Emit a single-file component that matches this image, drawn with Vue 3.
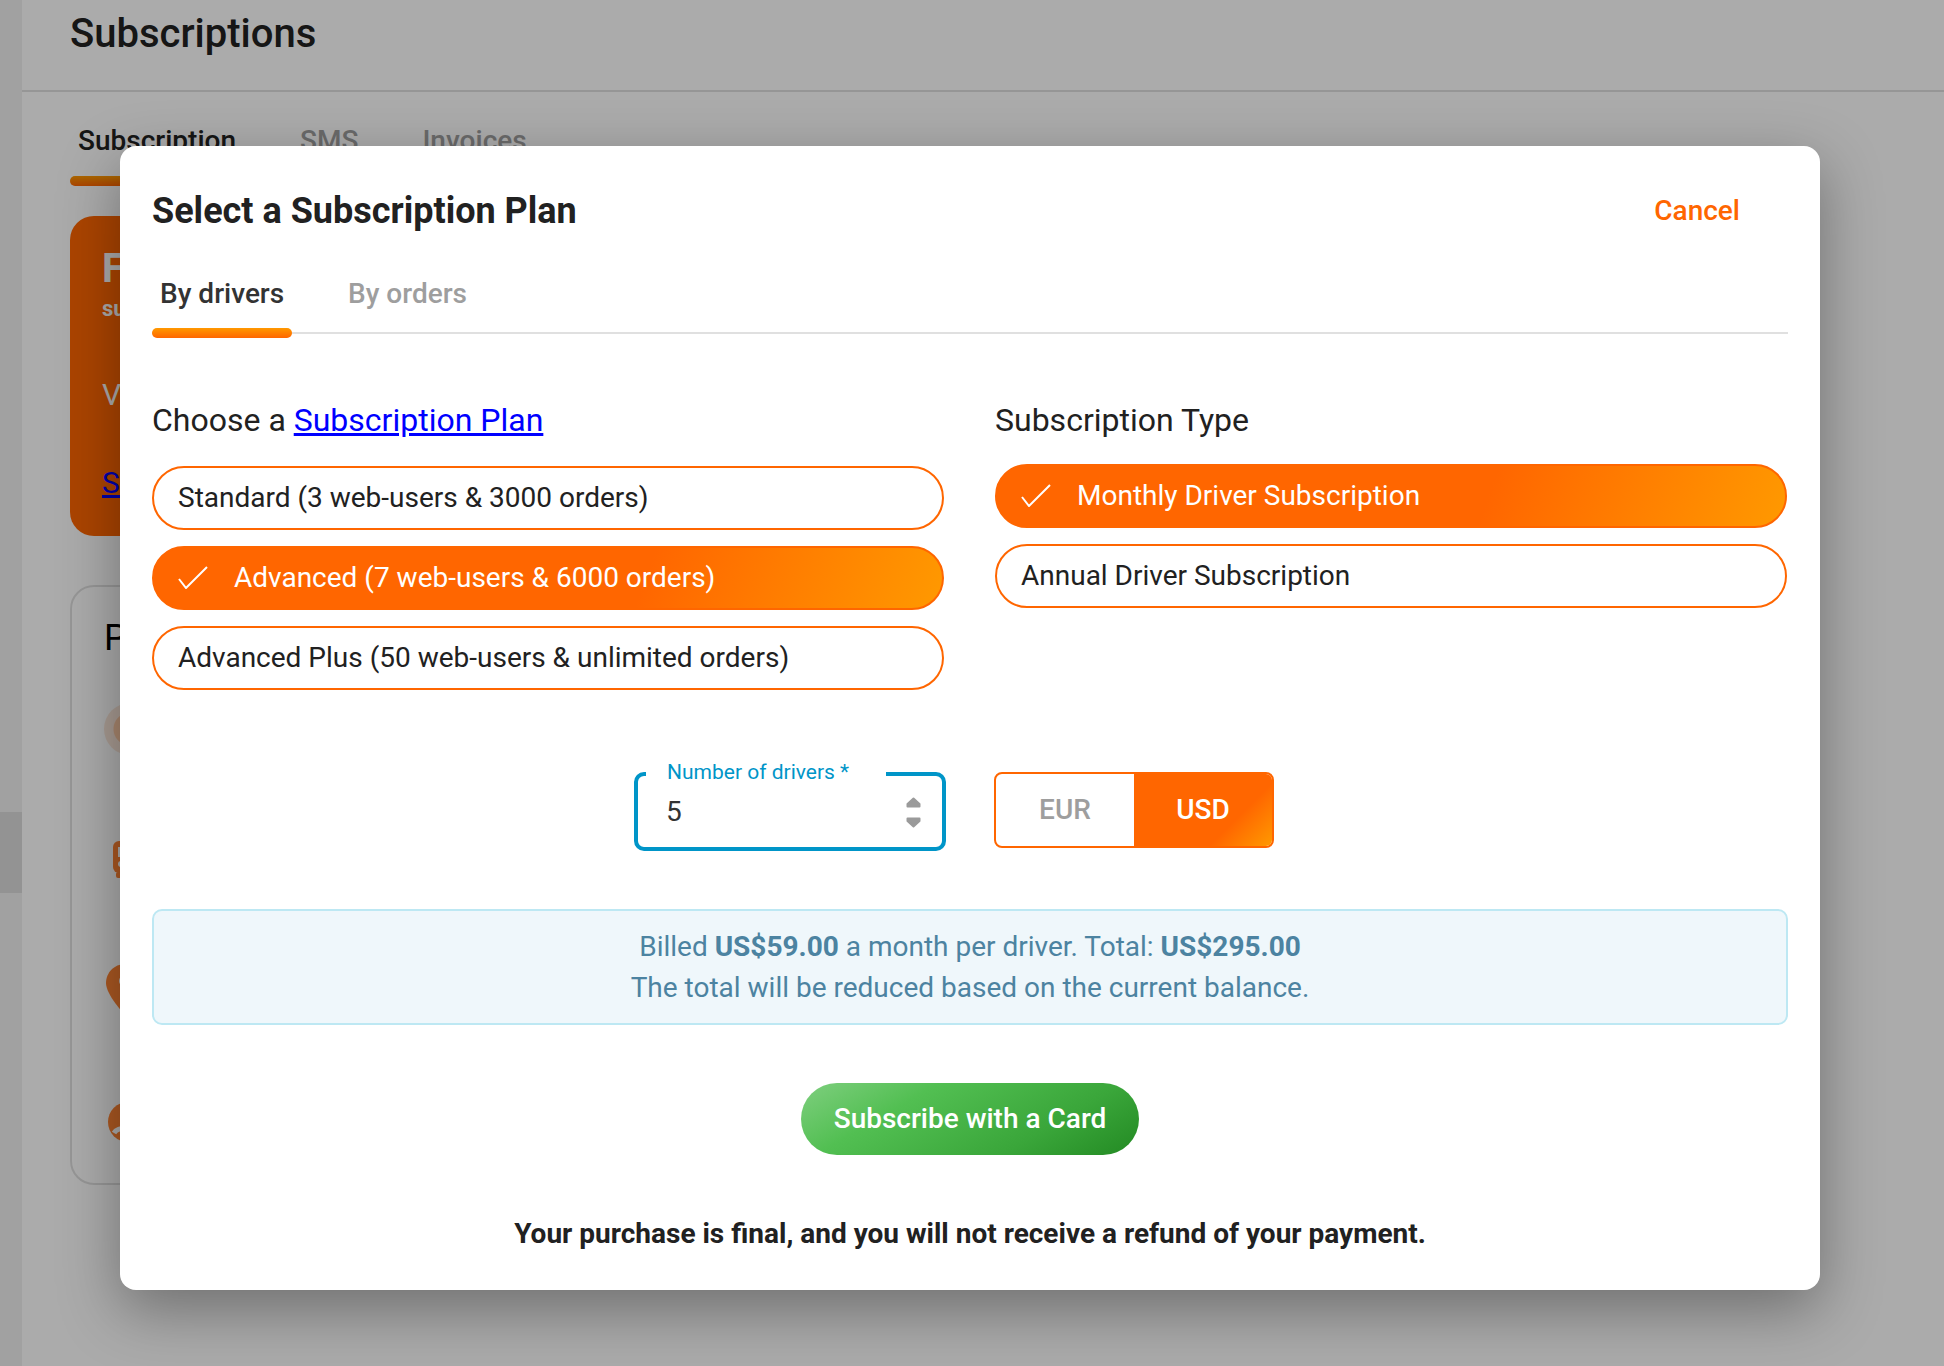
<script setup>
const plans = [
  { label: 'Standard (3 web-users & 3000 orders)', active: false },
  { label: 'Advanced (7 web-users & 6000 orders)', active: true },
  { label: 'Advanced Plus (50 web-users & unlimited orders)', active: false }
]
const types = [
  { label: 'Monthly Driver Subscription', active: true },
  { label: 'Annual Driver Subscription', active: false }
]
</script>

<template>
  <div class="page">
    <aside class="sidebar"><div class="side-item"></div></aside>
    <main class="main">
      <header class="page-head"><h1>Subscriptions</h1></header>
      <nav class="page-tabs">
        <span class="page-tab on">Subscription</span>
        <span class="page-tab">SMS</span>
        <span class="page-tab">Invoices</span>
      </nav>
      <section class="plan-card">
        <div class="plan-name">Free</div>
        <div class="plan-sub">subscription</div>
        <div class="plan-valid">Valid</div>
        <a class="plan-link" href="#">Subscribe</a>
      </section>
      <section class="features">
        <div class="features-title">Plan</div>
        <div class="feat-row"><span class="feat-dot"></span></div>
        <div class="feat-row">
          <svg width="40" height="40" viewBox="0 0 40 40"><rect x="1" y="2" width="34" height="32" rx="6" fill="#ff8433"/><rect x="6" y="8" width="24" height="10" fill="#fff"/><circle cx="9" cy="25" r="3" fill="#fff"/><rect x="4" y="33" width="8" height="6" rx="2" fill="#ff8433"/></svg>
        </div>
        <div class="feat-row">
          <svg width="40" height="56" viewBox="0 0 40 56"><path d="M20 1C9 1 1 10 1 20c0 12 19 32 19 32s19-20 19-32C39 10 31 1 20 1z" fill="#ff8433"/><circle cx="20" cy="18" r="6" fill="#fff"/></svg>
        </div>
        <div class="feat-row">
          <svg width="44" height="44" viewBox="0 0 44 44"><circle cx="22" cy="22" r="20" fill="#ff8433"/><circle cx="22" cy="16" r="7" fill="#fff"/><path d="M8 33c4-7 24-7 28 0" stroke="#fff" stroke-width="5" fill="none"/></svg>
        </div>
      </section>
    </main>

    <div class="backdrop">
      <div class="modal">
        <div class="modal-head">
          <h2>Select a Subscription Plan</h2>
          <button class="cancel" type="button">Cancel</button>
        </div>

        <div class="tabs">
          <span class="tab on">By drivers</span>
          <span class="tab">By orders</span>
        </div>

        <div class="choices">
          <div class="col col-left">
            <div class="col-label">Choose a <a href="#">Subscription Plan</a></div>
            <div class="pills">
              <div v-for="p in plans" :key="p.label" class="pill" :class="{ active: p.active }">
                <svg v-if="p.active" class="check" width="30" height="24" viewBox="0 0 30 24"><path d="M1 14l7 9L29 2" fill="none" stroke="#fff" stroke-width="2"/></svg>
                {{ p.label }}
              </div>
            </div>
          </div>
          <div class="col col-right">
            <div class="col-label">Subscription Type</div>
            <div class="pills">
              <div v-for="t in types" :key="t.label" class="pill" :class="{ active: t.active }">
                <svg v-if="t.active" class="check" width="30" height="24" viewBox="0 0 30 24"><path d="M1 14l7 9L29 2" fill="none" stroke="#fff" stroke-width="2"/></svg>
                {{ t.label }}
              </div>
            </div>
          </div>
        </div>

        <div class="qty-row">
          <fieldset class="qty">
            <legend>Number of drivers *</legend>
            <span class="qty-val">5</span>
            <span class="spin">
              <svg width="15" height="11" viewBox="0 0 15 11"><path d="M7.5 1.5L13.5 7v2.5h-12V7z" fill="#9a9a9a" stroke="#9a9a9a" stroke-width="2" stroke-linejoin="round"/></svg>
              <svg width="15" height="11" viewBox="0 0 15 11"><path d="M7.5 9.500L13.5 4V1.500h-12V4z" fill="#9a9a9a" stroke="#9a9a9a" stroke-width="2" stroke-linejoin="round"/></svg>
            </span>
          </fieldset>
          <div class="currency">
            <span class="cur">EUR</span>
            <span class="cur on">USD</span>
          </div>
        </div>

        <div class="info">
          <div>Billed <b>US$59.00</b> a month per driver. Total: <b>US$295.00</b></div>
          <div>The total will be reduced based on the current balance.</div>
        </div>

        <div class="submit-wrap"><button class="submit" type="button">Subscribe with a Card</button></div>

        <p class="final">Your purchase is final, and you will not receive a refund of your payment.</p>
      </div>
    </div>
  </div>
</template>

<style>
html, body { margin: 0; background: #fff; }
</style>

<style scoped>
* { box-sizing: border-box; }
.page {
  position: relative;
  width: 1944px;
  height: 1366px;
  overflow: hidden;
  display: flex;
  font-family: Roboto, "Liberation Sans", sans-serif;
  color: #212121;
  background: #fff;
}
.sidebar {
  width: 22px;
  flex: none;
  background: #f0f0f0;
  padding-top: 812px;
}
.side-item { height: 81px; background: #dcdcdc; }
.main { flex: 1; min-width: 0; }
.page-head {
  height: 92px;
  border-bottom: 2px solid #e0e0e0;
  padding: 11px 0 0 48px;
}
.page-head h1 {
  margin: 0;
  font-size: 40px;
  line-height: 46px;
  font-weight: 500;
}
.page-tabs {
  display: flex;
  gap: 48px;
  margin: 31px 0 0 48px;
  width: 460px;
}
.page-tab {
  position: relative;
  font-size: 28px;
  line-height: 36px;
  font-weight: 500;
  color: #9e9e9e;
  padding: 0 8px 27px;
}
.page-tab.on {
  color: #212121;
}
.page-tab.on::after {
  content: "";
  position: absolute;
  left: 0;
  right: 0;
  bottom: 0;
  height: 10px;
  border-radius: 5px;
  background: linear-gradient(#ff9900, #ff6600);
}
.plan-card {
  margin: 30px 0 0 48px;
  width: 1000px;
  height: 320px;
  border-radius: 24px;
  background: #ff6600;
  color: #fff;
  padding: 30px 32px;
}
.plan-name { font-size: 40px; font-weight: 700; line-height: 46px; }
.plan-sub { font-size: 22px; font-weight: 700; line-height: 26px; margin-top: 4px; }
.plan-valid { font-size: 30px; line-height: 36px; margin-top: 55px; }
.plan-link { display: block; font-size: 30px; line-height: 36px; margin-top: 52px; color: #00f; }
.features {
  margin: 49px 0 0 48px;
  width: 1000px;
  height: 600px;
  border: 2px solid #e0e0e0;
  border-radius: 24px;
  padding: 30px 32px;
}
.features-title { font-size: 36px; line-height: 42px; color: #000; }
.feat-row { height: 0; position: relative; }
.feat-row svg, .feat-dot { position: absolute; }
.feat-row:nth-child(2) .feat-dot {
  left: 0;
  top: 44px;
  width: 52px;
  height: 52px;
  border-radius: 50%;
  background: radial-gradient(circle, #fdc9a5 0 16px, #fbe7da 17px);
}
.feat-row:nth-child(3) svg { left: 8px; top: 180px; }
.feat-row:nth-child(4) svg { left: 1px; top: 304px; }
.feat-row:nth-child(5) svg { left: 2px; top: 441px; }

.backdrop {
  position: absolute;
  inset: 0;
  background: rgba(0, 0, 0, 0.33);
}
.modal {
  position: absolute;
  left: 120px;
  top: 146px;
  width: 1700px;
  height: 1144px;
  background: #fff;
  border-radius: 16px;
  padding: 0 32px;
  box-shadow: 0 20px 60px rgba(0, 0, 0, 0.35);
}
.modal-head {
  height: 95px;
  display: flex;
  align-items: center;
  justify-content: space-between;
  padding-top: 35px;
}
.modal-head h2 {
  margin: 0;
  font-size: 36px;
  line-height: 44px;
  font-weight: 700;
}
.cancel {
  border: 0;
  background: none;
  font: 500 28px/36px Roboto, sans-serif;
  color: #ff6600;
  padding: 0;
  margin-right: 48px;
}
.tabs {
  display: flex;
  gap: 48px;
  border-bottom: 2px solid #e0e0e0;
  height: 93px;
  padding-top: 35px;
}
.tab {
  position: relative;
  font-size: 28px;
  line-height: 36px;
  color: #9e9e9e;
  font-weight: 500;
  padding: 0 8px;
  white-space: nowrap;
}
.tab.on { color: #333; width: 140px; }
.tab.on::after {
  content: "";
  position: absolute;
  left: 0;
  right: 0;
  top: 52px;
  height: 10px;
  border-radius: 5px;
  background: linear-gradient(#ff9900, #ff6600);
}
.choices {
  display: grid;
  grid-template-columns: 792px 792px;
  column-gap: 51px;
  margin-top: 68px;
}
.col-label {
  font-size: 32px;
  line-height: 36px;
  color: #212121;
}
.col-label a { color: #00f; text-decoration: underline; }
.pills { display: flex; flex-direction: column; gap: 16px; }
.col-left .pills { margin-top: 28px; }
.col-right .pills { margin-top: 26px; }
.pill {
  height: 64px;
  border: 2px solid #ff6600;
  border-radius: 32px;
  padding: 0 24px 2px;
  display: flex;
  align-items: center;
  font-size: 28px;
  color: #212121;
}
.pill.active {
  background: linear-gradient(110deg, #ff6600 0%, #ff6600 62%, #ff9900 100%);
  color: #fff;
}
.check { margin-right: 26px; flex: none; }
.qty-row {
  display: flex;
  gap: 48px;
  margin-left: 482px;
  margin-top: 82px;
  align-items: flex-start;
}
.qty {
  position: relative;
  width: 312px;
  height: 91px;
  margin: -12px 0 0;
  padding: 0 28px;
  border: 4px solid #0095c8;
  border-radius: 10px;
  display: flex;
  align-items: center;
  justify-content: space-between;
}
.qty legend {
  font-size: 21px;
  line-height: 24px;
  color: #0095c8;
  padding: 0 37px 4px 21px;
  margin-left: -20px;
  white-space: nowrap;
}
.qty-val { font-size: 28px; color: #333; margin-top: -12px; }
.spin { display: flex; flex-direction: column; gap: 9px; margin-right: -7px; margin-top: -10px; }
.spin svg { display: block; }
.currency {
  display: flex;
  width: 280px;
  height: 76px;
  border: 2px solid #ff6600;
  border-radius: 8px;
  overflow: hidden;
}
.cur {
  flex: 1;
  display: flex;
  align-items: center;
  justify-content: center;
  padding-bottom: 2px;
  font-size: 28px;
  font-weight: 500;
  color: #9e9e9e;
}
.cur.on {
  color: #fff;
  background: linear-gradient(135deg, #ff6600 0%, #ff6600 70%, #ff9900 100%);
}
.info {
  margin-top: 58px;
  height: 116px;
  border: 2px solid #bde8f3;
  border-radius: 10px;
  background: #eff7fb;
  color: #4c83a1;
  text-align: center;
  font-size: 28px;
  line-height: 41px;
  padding-top: 15px;
}
.info b { font-weight: 700; }
.submit-wrap { display: flex; justify-content: center; margin-top: 58px; }
.submit {
  width: 338px;
  height: 72px;
  border: 0;
  border-radius: 36px;
  background: linear-gradient(150deg, #7fcf7f 0%, #52bf52 30%, #3aa63a 70%, #238a23 100%);
  color: #fff;
  font: 500 28px/36px Roboto, sans-serif;
  padding: 0;
}
.final {
  margin: 61px 0 0;
  text-align: center;
  font-size: 28px;
  line-height: 36px;
  font-weight: 700;
  color: #212121;
}
</style>
